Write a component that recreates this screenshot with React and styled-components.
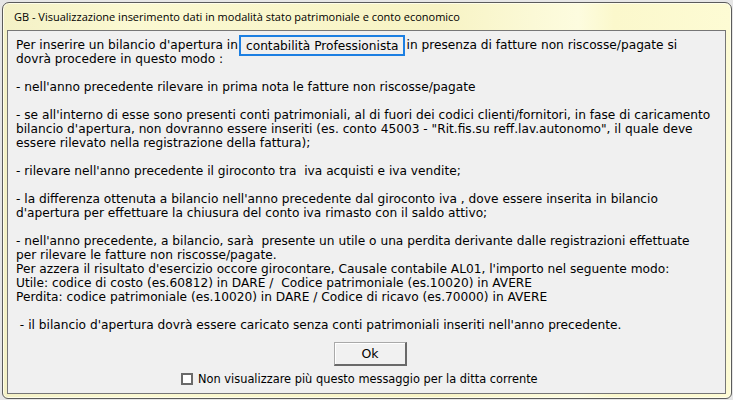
import React from "react";
import styled, { createGlobalStyle } from "styled-components";

const GlobalStyle = createGlobalStyle`
  html, body { margin: 0; padding: 0; background: #e6e6e6; }
  body { width: 733px; height: 400px; overflow: hidden; }
  #root { width: 733px; height: 400px; }
`;

const Window = styled.div`
  box-sizing: border-box;
  margin: 2px 1px 1px 2px;
  width: 730px;
  height: 397px;
  border: 1px solid #5b5b5b;
  border-radius: 7px 7px 6px 6px;
  background: linear-gradient(to right, #f4f1c6 0%, #fbf9d2 18%, #f7f3c4 60%, #fdfcdf 79%, #fbf8cc 84%, #fdfbd4 100%);
  box-shadow: inset 0 0 0 1px rgba(255, 255, 240, 0.85);
  display: flex;
  flex-direction: column;
  padding: 0 5px 4px 4px;
  font-family: "DejaVu Sans", Verdana, sans-serif;
`;

const TitleBar = styled.div`
  height: 27px;
  display: flex;
  align-items: center;
  padding-left: 7px;
  font-family: "Open Sans", "Noto Sans", sans-serif;
  font-size: 11px;
  color: #000;
  white-space: nowrap;
`;

const Client = styled.div`
  flex: 1;
  box-sizing: border-box;
  border: 1px solid #767676;
  background: #f0f0f0;
  display: flex;
  flex-direction: column;
  padding: 7px 0 0 8px;
`;

const Message = styled.div`
  font-size: 12.2px;
  line-height: 14px;
  color: #000;
  white-space: pre;
`;

const Line = styled.div`
  height: 14px;
`;

const Highlight = styled.span`
  border: 2px solid #1c7fe2;
  padding: 1.5px 4px 1.5px 5px;
  margin-left: 1px;
  margin-right: 2px;
`;

const ButtonRow = styled.div`
  display: flex;
  padding-left: 318px;
  margin-top: 10px;
`;

const OkButton = styled.button`
  box-sizing: border-box;
  width: 73px;
  height: 24px;
  padding: 0;
  background: #f1f1f1;
  border-style: solid;
  border-width: 1px 2px 2px 1px;
  border-color: #a9a9a9 #696969 #696969 #a9a9a9;
  box-shadow: inset 1px 1px 0 #ffffff;
  font-family: "DejaVu Sans", Verdana, sans-serif;
  font-size: 12.5px;
  color: #000;
  display: flex;
  align-items: center;
  justify-content: center;
`;

const CheckRow = styled.label`
  display: flex;
  align-items: center;
  gap: 5px;
  padding-left: 165px;
  margin-top: 6px;
  font-size: 11.4px;
  color: #000;
  white-space: nowrap;
`;

const Box = styled.span`
  box-sizing: border-box;
  width: 12px;
  height: 12px;
  border: 2px solid #6a6a6a;
  background: #fff;
`;

const lines = [
  null,
  "dovrà procedere in questo modo :",
  "",
  "- nell'anno precedente rilevare in prima nota le fatture non riscosse/pagate",
  "",
  "- se all'interno di esse sono presenti conti patrimoniali, al di fuori dei codici clienti/fornitori, in fase di caricamento",
  "bilancio d'apertura, non dovranno essere inseriti (es. conto 45003 - \"Rit.fis.su reff.lav.autonomo\", il quale deve",
  "essere rilevato nella registrazione della fattura);",
  "",
  "- rilevare nell'anno precedente il giroconto tra  iva acquisti e iva vendite;",
  "",
  "- la differenza ottenuta a bilancio nell'anno precedente dal giroconto iva , dove essere inserita in bilancio",
  "d'apertura per effettuare la chiusura del conto iva rimasto con il saldo attivo;",
  "",
  "- nell'anno precedente, a bilancio, sarà  presente un utile o una perdita derivante dalle registrazioni effettuate",
  "per rilevare le fatture non riscosse/pagate.",
  "Per azzera il risultato d'esercizio occore girocontare, Causale contabile AL01, l'importo nel seguente modo:",
  "Utile: codice di costo (es.60812) in DARE /  Codice patrimoniale (es.10020) in AVERE",
  "Perdita: codice patrimoniale (es.10020) in DARE / Codice di ricavo (es.70000) in AVERE",
  "",
  " - il bilancio d'apertura dovrà essere caricato senza conti patrimoniali inseriti nell'anno precedente.",
];

export default function App() {
  return (
    <>
      <GlobalStyle />
      <Window>
        <TitleBar>GB - Visualizzazione inserimento dati in modalità stato patrimoniale e conto economico</TitleBar>
        <Client>
          <Message>
            {lines.map((l, i) =>
              l === null ? (
                <Line key={i}>
                  Per inserire un bilancio d'apertura in<Highlight>contabilità Professionista</Highlight>in presenza di fatture non riscosse/pagate si
                </Line>
              ) : (
                <Line key={i}>{l}</Line>
              )
            )}
          </Message>
          <ButtonRow>
            <OkButton>Ok</OkButton>
          </ButtonRow>
          <CheckRow>
            <Box />
            Non visualizzare più questo messaggio per la ditta corrente
          </CheckRow>
        </Client>
      </Window>
    </>
  );
}
